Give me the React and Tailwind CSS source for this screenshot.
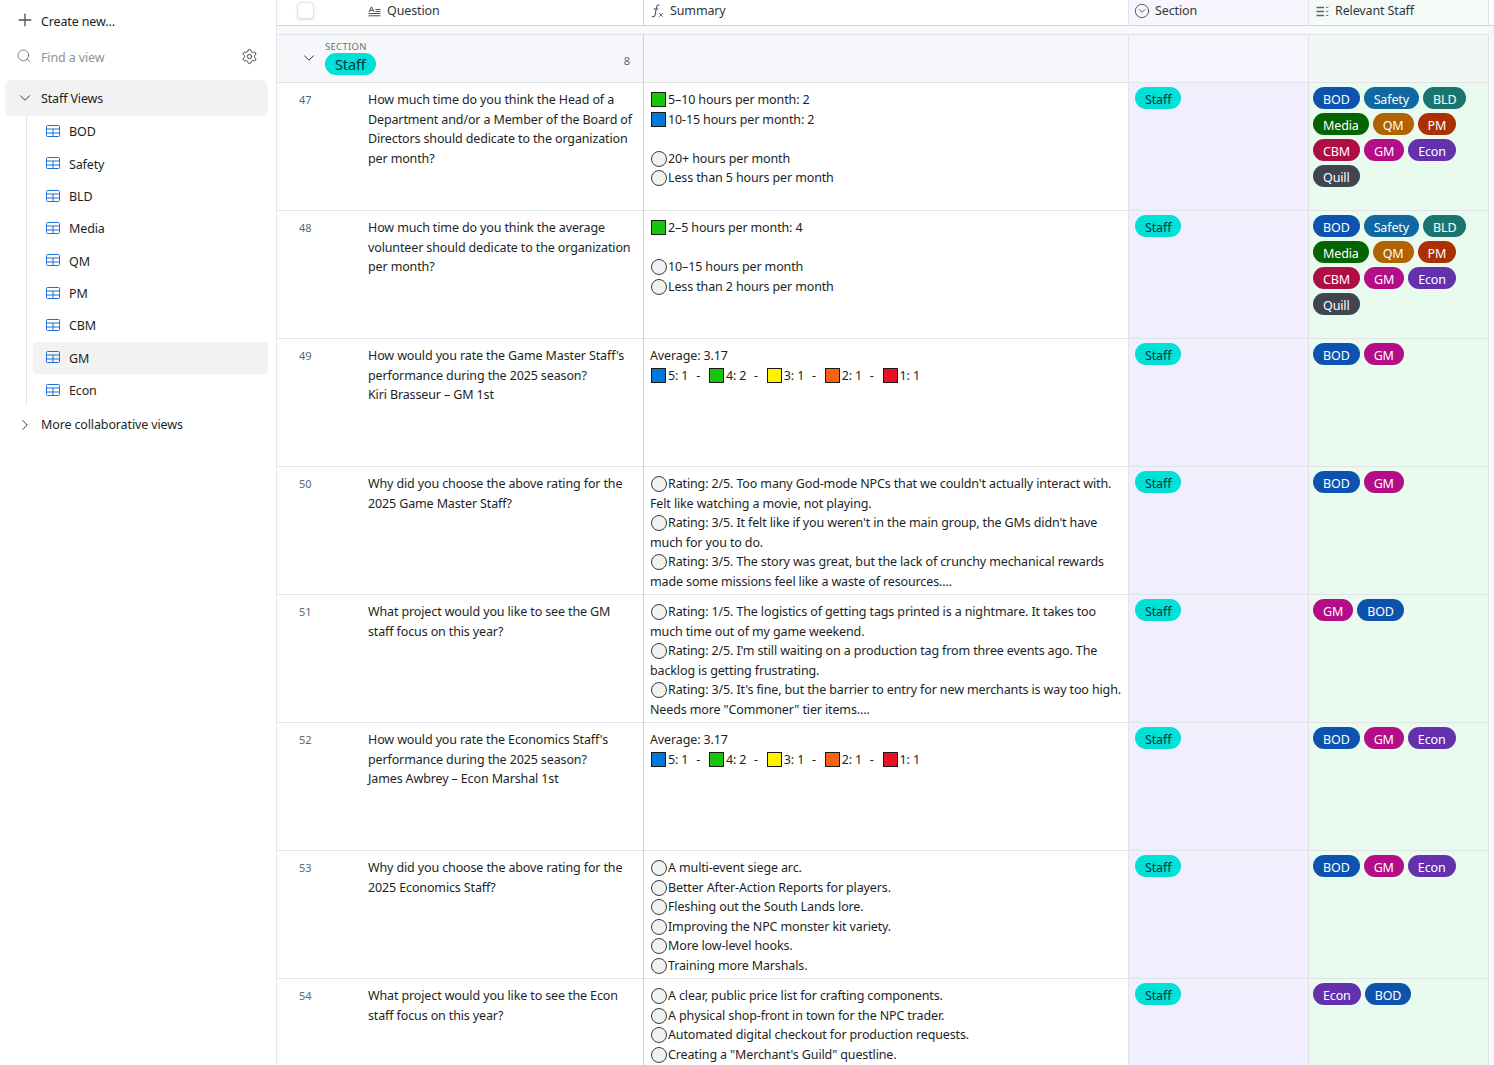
import React from "react";
import { Plus, Search, Settings, ChevronDown, ChevronRight, CircleChevronDown } from "lucide-react";

const pillColors = {
  BOD: "bg-[#0d52ac]",
  Safety: "bg-[#0f68a2]",
  BLD: "bg-[#1a7470]",
  Media: "bg-[#046404]",
  QM: "bg-[#b06300]",
  PM: "bg-[#ac3003]",
  CBM: "bg-[#af0d45]",
  GM: "bg-[#b30d88]",
  Econ: "bg-[#6530ad]",
  Quill: "bg-[#41454f]",
};

const allStaff = ["BOD", "Safety", "BLD", "Media", "QM", "PM", "CBM", "GM", "Econ", "Quill"];
const views = ["BOD", "Safety", "BLD", "Media", "QM", "PM", "CBM", "GM", "Econ"];

const ratings = [
  ["blue", "5: 1"],
  ["green", "4: 2"],
  ["yellow", "3: 1"],
  ["orange", "2: 1"],
  ["red", "1: 1"],
];

const rows = [
  {
    id: 47,
    question: ["How much time do you think the Head of a", "Department and/or a Member of the Board of", "Directors should dedicate to the organization", "per month?"],
    summary: [["green", "5–10 hours per month: 2"], ["blue", "10-15 hours per month: 2"], [null, ""], ["circle", "20+ hours per month"], ["circle", "Less than 5 hours per month"]],
    staff: allStaff,
  },
  {
    id: 48,
    question: ["How much time do you think the average", "volunteer should dedicate to the organization", "per month?"],
    summary: [["green", "2–5 hours per month: 4"], [null, ""], ["circle", "10–15 hours per month"], ["circle", "Less than 2 hours per month"]],
    staff: allStaff,
  },
  {
    id: 49,
    question: ["How would you rate the Game Master Staff's", "performance during the 2025 season?", "Kiri Brasseur – GM 1st"],
    rating: true,
    staff: ["BOD", "GM"],
  },
  {
    id: 50,
    question: ["Why did you choose the above rating for the", "2025 Game Master Staff?"],
    summary: [
      ["circle", "Rating: 2/5. Too many God-mode NPCs that we couldn't actually interact with."],
      [null, "Felt like watching a movie, not playing."],
      ["circle", "Rating: 3/5. It felt like if you weren't in the main group, the GMs didn't have"],
      [null, "much for you to do."],
      ["circle", "Rating: 3/5. The story was great, but the lack of crunchy mechanical rewards"],
      [null, "made some missions feel like a waste of resources...."],
    ],
    staff: ["BOD", "GM"],
  },
  {
    id: 51,
    question: ["What project would you like to see the GM", "staff focus on this year?"],
    summary: [
      ["circle", "Rating: 1/5. The logistics of getting tags printed is a nightmare. It takes too"],
      [null, "much time out of my game weekend."],
      ["circle", "Rating: 2/5. I'm still waiting on a production tag from three events ago. The"],
      [null, "backlog is getting frustrating."],
      ["circle", "Rating: 3/5. It's fine, but the barrier to entry for new merchants is way too high."],
      [null, 'Needs more "Commoner" tier items....'],
    ],
    staff: ["GM", "BOD"],
  },
  {
    id: 52,
    question: ["How would you rate the Economics Staff's", "performance during the 2025 season?", "James Awbrey – Econ Marshal 1st"],
    rating: true,
    staff: ["BOD", "GM", "Econ"],
  },
  {
    id: 53,
    question: ["Why did you choose the above rating for the", "2025 Economics Staff?"],
    summary: [
      ["circle", "A multi-event siege arc."],
      ["circle", "Better After-Action Reports for players."],
      ["circle", "Fleshing out the South Lands lore."],
      ["circle", "Improving the NPC monster kit variety."],
      ["circle", "More low-level hooks."],
      ["circle", "Training more Marshals."],
    ],
    staff: ["BOD", "GM", "Econ"],
  },
  {
    id: 54,
    question: ["What project would you like to see the Econ", "staff focus on this year?"],
    summary: [
      ["circle", "A clear, public price list for crafting components."],
      ["circle", "A physical shop-front in town for the NPC trader."],
      ["circle", "Automated digital checkout for production requests."],
      ["circle", 'Creating a "Merchant\'s Guild" questline.'],
    ],
    staff: ["Econ", "BOD"],
  },
];

function TableIcon() {
  return (
    <svg width="14" height="12" viewBox="0 0 14 12" fill="none" stroke="#1f6fdc" strokeWidth="1" className="shrink-0 -mt-[1px]">
      <rect x="0.5" y="0.5" width="13" height="11" rx="1" />
      <path d="M0.5 4H13.5M0.5 8H13.5M7 4V11.5" />
    </svg>
  );
}

function LongTextIcon() {
  return (
    <svg width="13" height="11" viewBox="0 0 13 11" fill="none" stroke="#4d4f55" strokeWidth="1" className="shrink-0">
      <path d="M1 6L3.5 0.8L6 6M1.8 4.4H5.2M7.5 3.5H12.5M7.5 5.5H12.5M0.5 7.5H12.5M0.5 9.8H12.5" />
    </svg>
  );
}

function FormulaIcon() {
  return (
    <svg width="13" height="14" viewBox="0 0 13 14" fill="none" stroke="#4d4f55" strokeWidth="1.1" className="shrink-0">
      <path d="M8.5 1.2C6.5 0.6 5.8 1.6 5.4 3.5L4.2 10.5C3.9 12.4 2.9 13 1 12.4M2.6 5H7.6" />
      <path d="M8 9L11.8 12.8M11.8 9L8 12.8" strokeWidth="0.9" />
    </svg>
  );
}

function MultiSelectIcon() {
  return (
    <svg width="13" height="11" viewBox="0 0 13 11" fill="none" stroke="#5f6167" strokeWidth="1.4" className="shrink-0">
      <path d="M0.5 1.5H8M0.5 5.5H8M0.5 9.5H8" />
      <path d="M10 0.8L11.2 2L12.4 0.8M10 4.8L11.2 6L12.4 4.8M10 8.8L11.2 10L12.4 8.8" strokeWidth="1" />
    </svg>
  );
}

function Mark({ kind }) {
  if (kind === "circle") {
    return <span className="inline-block w-[16px] h-[16px] mr-[1px] ml-[1px] rounded-full border border-[#3a3a3a] bg-[#f1f1f1] align-[-4px]" />;
  }
  const fill = {
    green: "bg-[#16c60c]",
    blue: "bg-[#0078d7]",
    yellow: "bg-[#fff100]",
    orange: "bg-[#f7630c]",
    red: "bg-[#e81224]",
  }[kind];
  return <span className={`inline-block w-[15px] h-[15px] mr-[2px] ml-[1px] border border-[#1a1a1a] align-[-3px] ${fill}`} />;
}

function Pill({ label }) {
  return (
    <span className={`h-[22px] px-[10px] pt-[3px] rounded-full flex items-center text-white ${pillColors[label]}`}>
      {label}
    </span>
  );
}

function StaffPill() {
  return <span className="h-[22px] px-[10px] pt-[3px] rounded-full flex items-center text-[#0b2f33] bg-[#00dfd8]">Staff</span>;
}

function RatingLine() {
  return (
    <div className="h-[19.5px] flex items-center whitespace-nowrap">
      {ratings.map(([kind, text], i) => (
        <span key={kind} className="flex items-center">
          <Mark kind={kind} />
          <span>{text}</span>
          {i < ratings.length - 1 && <span className="w-[19.5px] text-center">-</span>}
        </span>
      ))}
    </div>
  );
}

function Row({ row }) {
  return (
    <div className="grid grid-cols-[367px_485px_180px_180px_1fr] h-[128px] overflow-hidden">
      <div className="flex border-b border-[#e1e3e8] bg-white border-r-[#cfd0d2] border-r">
        <div className="w-[91px] shrink-0 pl-[22px] pt-[10px] text-[11px] leading-[14px] text-[#61656e]">{row.id}</div>
        <div className="pt-[7px] leading-[19.5px] whitespace-nowrap">
          {row.question.map((line) => (
            <div key={line}>{line}</div>
          ))}
        </div>
      </div>
      <div className="border-b border-r border-[#e1e3e8] bg-white pl-[6px] pt-[7px] leading-[19.5px] whitespace-nowrap">
        {row.rating ? (
          <>
            <div>Average: 3.17</div>
            <RatingLine />
          </>
        ) : (
          row.summary.map(([kind, text], i) => (
            <div key={i} className="h-[19.5px]">
              {kind && <Mark kind={kind} />}
              {text}
            </div>
          ))
        )}
      </div>
      <div className="border-b border-r border-[#e1e3e8] bg-[#f1effd] pl-[6px] pt-[4px] flex items-start">
        <StaffPill />
      </div>
      <div className="border-b border-r border-[#e1e3e8] bg-[#e9faee] pl-[4px] pt-[4px] flex flex-wrap content-start gap-x-[4px] gap-y-[4px]">
        {row.staff.map((s) => (
          <Pill key={s} label={s} />
        ))}
      </div>
      <div className="bg-[#f8f8fc]" />
    </div>
  );
}

function Sidebar() {
  return (
    <aside className="w-[277px] shrink-0 h-full border-r border-[#e5e5e5] bg-white px-[5px] pt-[4px] text-[#1d1f25]">
      <div className="h-[34px] flex items-center">
        <Plus size={20} strokeWidth={1.6} className="ml-[10px] mr-[6px] -mt-[2px] text-[#4d4f55]" />
        <span className="mt-[1px]">Create new...</span>
      </div>
      <div className="h-[34px] mt-[2px] flex items-center">
        <Search size={16} strokeWidth={1.3} className="ml-[11px] mr-[9px] -mt-[2px] text-[#6d7078]" />
        <span className="mt-[1px] text-[#8f9299]">Find a view</span>
        <Settings size={17} strokeWidth={1.3} className="ml-auto mr-[13px] -mt-[2px] text-[#33353b]" />
      </div>
      <div className="h-[36px] mt-[6px] rounded-md bg-[#f2f2f2] flex items-center mr-[3px]">
        <ChevronDown size={18} strokeWidth={1.3} className="ml-[11px] mr-[7px] text-[#33353b]" />
        <span className="mt-[1px]">Staff Views</span>
      </div>
      <div className="ml-[21px] -mt-[0.5px] border-l border-[#e5e5e5] pl-[6px] mr-[3px]">
        {views.map((v) => (
          <div key={v} className={`h-[32.33px] flex items-center pl-[13px] rounded ${v === "GM" ? "bg-[#f2f2f2]" : ""}`}>
            <TableIcon />
            <span className="ml-[9px] mt-[1px]">{v}</span>
          </div>
        ))}
      </div>
      <div className="h-[36px] mt-[0.5px] flex items-center">
        <ChevronRight size={18} strokeWidth={1.3} className="ml-[11px] mr-[7px] text-[#33353b]" />
        <span>More collaborative views</span>
      </div>
    </aside>
  );
}

function Header() {
  return (
    <div className="grid grid-cols-[367px_485px_180px_180px_1fr] h-[26px] border-b border-[#d3d4d6] text-[#33353b]">
      <div className="flex items-center pb-[3px] bg-white border-r border-[#cfd0d2]">
        <span className="ml-[20px] -mt-[2px] w-[17px] h-[17px] rounded border border-[#e3e3e3] bg-white shadow-sm" />
        <span className="ml-[54px] flex items-center gap-[6px]">
          <LongTextIcon />
          Question
        </span>
      </div>
      <div className="flex items-center pb-[3px] gap-[6px] pl-[7px] bg-white border-r border-[#e1e3e8]">
        <FormulaIcon />
        Summary
      </div>
      <div className="flex items-center pb-[3px] gap-[5px] pl-[5px] bg-[#f7f6fe] border-r border-[#e1e3e8]">
        <CircleChevronDown size={16} strokeWidth={1.2} />
        Section
      </div>
      <div className="flex items-center pb-[3px] gap-[6px] pl-[7px] bg-[#f4fbf6] border-r border-[#e1e3e8]">
        <MultiSelectIcon />
        Relevant Staff
      </div>
      <div className="bg-white" />
    </div>
  );
}

function GroupRow() {
  return (
    <div className="grid grid-cols-[367px_485px_180px_180px_1fr] h-[49px] mt-[8px]">
      <div className="flex items-center border-y border-[#e1e3e8] border-r-[#cfd0d2] border-r bg-[#f6f7fb]">
        <ChevronDown size={18} strokeWidth={1.3} className="ml-[23px] -mt-[1px] text-[#33353b]" />
        <div className="ml-[7px] -mt-[1px]">
          <div className="text-[9.5px] leading-[12px] tracking-[0.3px] text-[#6d7078]">SECTION</div>
          <span className="inline-flex h-[22px] px-[10px] pt-[1px] rounded-full items-center text-[14.5px] text-[#0b2f33] bg-[#00dfd8]">Staff</span>
        </div>
        <span className="ml-auto mr-[13px] mt-[5px] text-[11px] text-[#61656e]">8</span>
      </div>
      <div className="border-y border-r border-[#e1e3e8] bg-[#f6f7fb]" />
      <div className="border-y border-r border-[#e1e3e8] bg-[#f5f5fd]" />
      <div className="border-y border-r border-[#e1e3e8] bg-[#f1f8f4]" />
      <div />
    </div>
  );
}

export default function App() {
  return (
    <div className="w-[1494px] h-[1065px] overflow-hidden flex bg-white text-[12.5px] leading-[19.5px] tracking-[-0.13px] text-[#1d1f25] font-['Noto_Sans',sans-serif]">
      <Sidebar />
      <main className="flex-1 min-w-0 bg-[#f8f8fc] overflow-hidden">
        <Header />
        <GroupRow />
        {rows.map((row) => (
          <Row key={row.id} row={row} />
        ))}
      </main>
    </div>
  );
}
